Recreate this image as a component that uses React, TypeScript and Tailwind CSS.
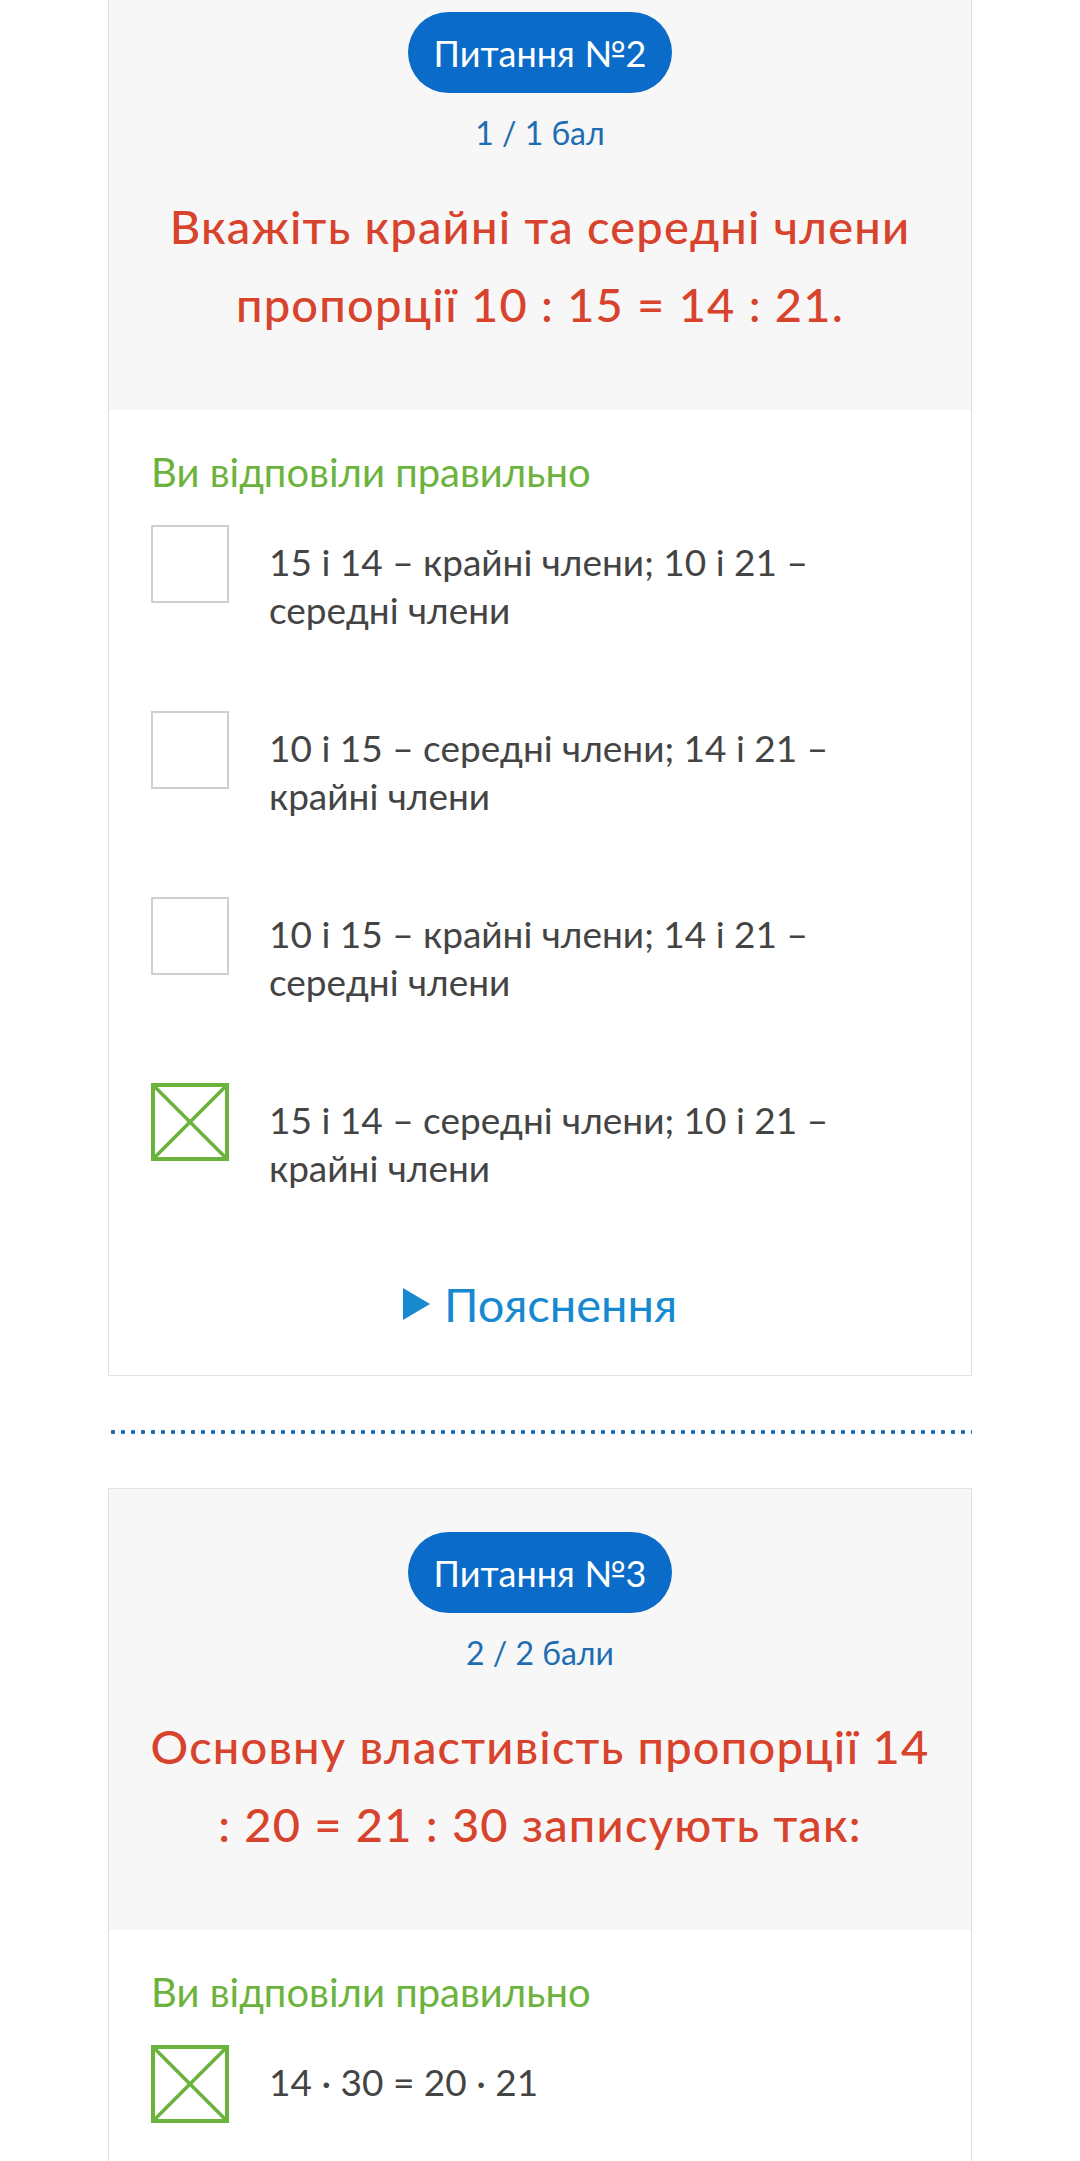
import React from "react";

type Option = {
  lines: string[];
  checked?: boolean;
};

type Question = {
  number: number;
  score: string;
  title: string[];
  options: Option[];
  explain?: boolean;
};

const QUESTIONS: Question[] = [
  {
    number: 2,
    score: "1 / 1 бал",
    title: ["Вкажіть крайні та середні члени", "пропорції 10 : 15 = 14 : 21."],
    options: [
      { lines: ["15 і 14 – крайні члени; 10 і 21 –", "середні члени"] },
      { lines: ["10 і 15 – середні члени; 14 і 21 –", "крайні члени"] },
      { lines: ["10 і 15 – крайні члени; 14 і 21 –", "середні члени"] },
      { lines: ["15 і 14 – середні члени; 10 і 21 –", "крайні члени"], checked: true },
    ],
    explain: true,
  },
  {
    number: 3,
    score: "2 / 2 бали",
    title: ["Основну властивість пропорції 14", ": 20 = 21 : 30 записують так:"],
    options: [{ lines: ["14 · 30 = 20 · 21"], checked: true }],
  },
];

// Square answer box, crossed when the option was picked
function AnswerBox({ checked }: { checked?: boolean }) {
  if (!checked) {
    return <div className="w-[78px] h-[78px] shrink-0 border-2 border-[#cfcfcf] bg-white" />;
  }
  return (
    <div className="w-[78px] h-[78px] shrink-0 border-[4px] border-[#6cb33e] bg-white">
      <svg className="w-full h-full" viewBox="0 0 70 70" preserveAspectRatio="none">
        <line x1="0" y1="0" x2="70" y2="70" stroke="#6cb33e" strokeWidth="3.5" />
        <line x1="70" y1="0" x2="0" y2="70" stroke="#6cb33e" strokeWidth="3.5" />
      </svg>
    </div>
  );
}

function QuestionCard({ q, className = "" }: { q: Question; className?: string }) {
  return (
    <div className={`w-[864px] mx-auto border border-[#e2e2e2] bg-white ${className}`}>
      {/* Header: number pill, score, question text */}
      <div className="bg-[#f7f7f7] pt-[43px] pb-[67px] px-[20px] flex flex-col items-center">
        <div className="w-[264px] h-[81px] rounded-full bg-[#0b6bc9] flex items-center justify-center text-white text-[36px]">
          Питання №{q.number}
        </div>
        <div className="mt-[20px] text-[32px] leading-[40px] text-[#1d6db3]">{q.score}</div>
        <div className="mt-[34px] text-center text-[47px] leading-[78px] tracking-[1.2px] font-medium text-[#d7432c] whitespace-nowrap">
          {q.title[0]}
          <br />
          {q.title[1]}
        </div>
      </div>

      {/* Answers */}
      <div className="px-[42px] pt-[38px] pb-[45px]">
        <div className="text-[40px] leading-[48px] text-[#6cb33e]">Ви відповіли правильно</div>
        <div className="mt-[29px] flex flex-col gap-[77px]">
          {q.options.map((o, i) => (
            <div key={i} className="flex items-start gap-[40px]">
              <AnswerBox checked={o.checked} />
              <div className="pt-[13px] text-[37px] leading-[48px] text-[#444444] whitespace-nowrap">
                {o.lines.map((l, j) => (
                  <div key={j}>{l}</div>
                ))}
              </div>
            </div>
          ))}
        </div>
        {q.explain && (
          <div className="mt-[86px] flex items-center justify-center gap-[14px] text-[#1689d0] text-[47px] leading-[52px]">
            <svg width="27" height="32" viewBox="0 0 27 32">
              <polygon points="0,0 27,16 0,32" fill="#1689d0" />
            </svg>
            <span>Пояснення</span>
          </div>
        )}
      </div>
    </div>
  );
}

export default function App() {
  return (
    <div className="w-[1080px] h-[2161px] overflow-hidden bg-white font-['Lato','Noto_Sans',sans-serif]">
      <QuestionCard q={QUESTIONS[0]} className="-mt-[32px]" />
      {/* dotted separator */}
      <div className="w-[864px] mx-auto my-[54px] h-[4px] bg-[radial-gradient(circle,#1a68b0_2px,transparent_2.4px)] bg-[length:10px_4px]" />
      <QuestionCard q={QUESTIONS[1]} className="pb-[200px]" />
    </div>
  );
}
